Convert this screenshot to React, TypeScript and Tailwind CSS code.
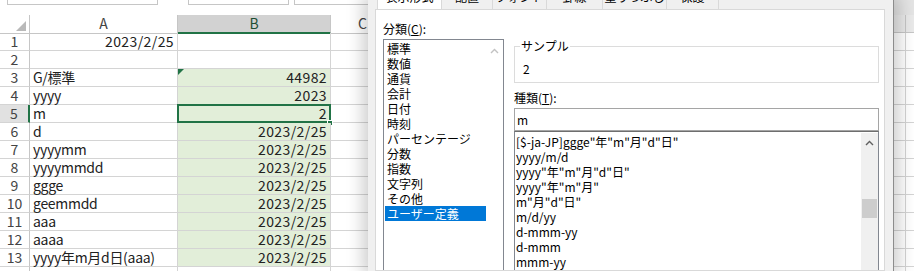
import React from "react";

const JP = "font-['Noto_Sans_CJK_JP','Noto_Sans',sans-serif]";

type Row = { n: number; a?: string; aRight?: string; b?: string };

const ROWS: Row[] = [
  { n: 1, aRight: "2023/2/25" },
  { n: 2 },
  { n: 3, a: "G/標準", b: "44982" },
  { n: 4, a: "yyyy", b: "2023" },
  { n: 5, a: "m", b: "2" },
  { n: 6, a: "d", b: "2023/2/25" },
  { n: 7, a: "yyyymm", b: "2023/2/25" },
  { n: 8, a: "yyyymmdd", b: "2023/2/25" },
  { n: 9, a: "ggge", b: "2023/2/25" },
  { n: 10, a: "geemmdd", b: "2023/2/25" },
  { n: 11, a: "aaa", b: "2023/2/25" },
  { n: 12, a: "aaaa", b: "2023/2/25" },
  { n: 13, a: "yyyy年m月d日(aaa)", b: "2023/2/25" },
  { n: 14 },
];

const CATEGORIES = [
  "標準",
  "数値",
  "通貨",
  "会計",
  "日付",
  "時刻",
  "パーセンテージ",
  "分数",
  "指数",
  "文字列",
  "その他",
  "ユーザー定義",
];

const FORMATS = [
  '[$-ja-JP]ggge"年"m"月"d"日"',
  "yyyy/m/d",
  'yyyy"年"m"月"d"日"',
  'yyyy"年"m"月"',
  'm"月"d"日"',
  "m/d/yy",
  "d-mmm-yy",
  "d-mmm",
  "mmm-yy",
  "h:mm AM/PM",
];

const TABS = [
  { label: "表示形式", w: "w-[65px]", active: true },
  { label: "配置", w: "w-[51px]" },
  { label: "フォント", w: "w-[54px]" },
  { label: "罫線", w: "w-[56px]" },
  { label: "塗りつぶし", w: "w-[64px]" },
  { label: "保護", w: "w-[52px]" },
];

function ChevronUp({ color }: { color: string }) {
  return (
    <svg width="9" height="6" viewBox="0 0 9 6" fill="none">
      <path d="M1 5L4.5 1.5L8 5" stroke={color} strokeWidth="1.4" />
    </svg>
  );
}

function Sheet() {
  return (
    <div className={`w-[368px] h-[271px] shrink-0 flex flex-col overflow-hidden text-[14px] text-[#222] ${JP}`}>
      {/* formula bar remnants */}
      <div className="h-[15px] shrink-0 flex items-start bg-white">
        <div className="ml-[7px] w-[163px] h-[5px] border-x border-b border-[#c6c6c6]" />
        <div className="ml-[30px] w-[110px] h-[5px] border-x border-b border-[#c6c6c6]" />
        <div className="ml-[5px] w-[80px] h-[5px] border-l border-b border-[#c6c6c6]" />
      </div>

      {/* column header */}
      <div className="grid grid-cols-[30px_148px_153px_64px] h-[18px] shrink-0 text-[14px] leading-[17px] text-[#444]">
        <div className="border-r border-b border-[#c6c6c6] flex items-end justify-end pr-[3px] pb-[2px]">
          <svg width="10" height="10" viewBox="0 0 10 10">
            <path d="M10 0V10H0Z" fill="#b9b9b9" />
          </svg>
        </div>
        <div className="border-r border-b border-[#c6c6c6] text-center">A</div>
        <div className="bg-[#d2d2d2] border-r border-[#c6c6c6] border-b-2 border-b-[#217346] text-center text-[#1e4e33]">B</div>
        <div className="border-r border-b border-[#c6c6c6] text-center">C</div>
      </div>

      {ROWS.map((r) => {
        const sel = r.n >= 3 && r.n <= 13;
        const active = r.n === 5;
        return (
          <div key={r.n} className="grid grid-cols-[30px_148px_153px_64px] h-[18px] leading-[17px] shrink-0">
            <div
              className={`border-b border-[#d4d4d4] text-center text-[#444] ${
                active ? "bg-[#e1e1e1] border-r-2 border-r-[#217346]" : "border-r border-r-[#c6c6c6]"
              }`}
            >
              {r.n}
            </div>
            <div className="border-r border-b border-[#d4d4d4] px-[3px] whitespace-nowrap tracking-[-0.3px]">
              {r.aRight ? <div className="text-right tracking-[0.4px]">{r.aRight}</div> : r.a}
            </div>
            <div
              className={`relative border-r border-b border-[#d4d4d4] px-[3px] text-right tracking-[0.4px] ${
                sel ? "bg-[#e2eed9]" : ""
              }`}
            >
              {r.b}
              {r.n === 3 && (
                <svg className="absolute left-0 top-0" width="6" height="6" viewBox="0 0 6 6">
                  <path d="M0 0H6L0 6Z" fill="#217346" />
                </svg>
              )}
              {active && (
                <>
                  <div className="absolute -left-[1px] -top-[1px] -right-[1px] -bottom-[1px] border-2 border-[#217346]" />
                  <div className="absolute -right-[3px] -bottom-[4px] w-[6px] h-[6px] bg-[#217346] border border-white" />
                </>
              )}
            </div>
            <div className="border-r border-b border-[#d4d4d4]" />
          </div>
        );
      })}
    </div>
  );
}

function SheetRight() {
  return (
    <div className="flex-1 h-[271px] flex flex-col overflow-hidden">
      <div className="h-[15px] shrink-0 bg-[#e4e4e4]" />
      <div className="h-[18px] shrink-0 bg-[#e9e9e9] border-b border-[#c6c6c6] flex">
        <div className="w-[12px] border-r border-[#c6c6c6]" />
      </div>
      {ROWS.map((r) => (
        <div key={r.n} className="h-[18px] shrink-0 flex border-b border-[#d4d4d4]">
          <div className="w-[12px] border-r border-[#d4d4d4]" />
        </div>
      ))}
    </div>
  );
}

function Dialog() {
  return (
    <div
      className={`relative z-10 w-[526px] h-[271px] shrink-0 flex flex-col bg-[#f0f0f0] pl-[7px] pr-[8px] border-r border-[#8c8c8c] shadow-[0_0_16px_5px_rgba(0,0,0,0.2)] text-[12px] leading-[15px] text-black ${JP}`}
    >
      {/* tabs, cut off at the top of the shot */}
      <div className="h-[9px] shrink-0 overflow-hidden flex items-end pl-[2px]">
        {TABS.map((t) => (
          <div
            key={t.label}
            className={`${t.w} h-[26px] shrink-0 flex items-center justify-center border-t border-r border-[#d9d9d9] ${
              t.active ? "bg-white border-l" : "bg-[#f0f0f0]"
            }`}
          >
            {t.label}
          </div>
        ))}
      </div>

      <div className="flex-1 min-h-0 overflow-hidden bg-white border border-[#d9d9d9] pl-[7px] pr-[5px] flex gap-[10px]">
        {/* category */}
        <div className="w-[121px] shrink-0 flex flex-col">
          <div className="mt-[11px] shrink-0">
            分類(<span className="underline">C</span>):
          </div>
          <div className="mt-[3px] h-[260px] shrink-0 border border-[#828790] flex">
            <div className="w-[102px] pt-[1px] pl-[1px]">
              {CATEGORIES.map((c) => (
                <div
                  key={c}
                  className={`h-[15px] pl-[2px] whitespace-nowrap ${
                    c === "ユーザー定義" ? "bg-[#0078d7] text-white" : ""
                  }`}
                >
                  {c}
                </div>
              ))}
            </div>
            <div className="flex-1 flex justify-center pt-[8px]">
              <ChevronUp color="#c2c2c2" />
            </div>
          </div>
        </div>

        {/* sample + type */}
        <div className="flex-1 flex flex-col">
          <div className="relative mt-[36px] h-[37px] shrink-0 border border-[#dcdcdc] pl-[8px] pt-[14px]">
            <span className="absolute left-[5px] -top-[9px] bg-white px-[1px]">サンプル</span>
            2
          </div>
          <div className="mt-[7px] shrink-0">
            種類(<span className="underline">T</span>):
          </div>
          <div className="mt-[3px] h-[23px] shrink-0 border border-[#a5a5a5] pl-[2px] flex items-center">m</div>
          <div className="h-[160px] shrink-0 border border-[#828790] border-t-[#6e6e6e] flex">
            <div className="flex-1 pt-[2px] pl-[1px]">
              {FORMATS.map((f) => (
                <div key={f} className="h-[15px] whitespace-nowrap">
                  {f}
                </div>
              ))}
            </div>
            <div className="w-[17px] mt-[1px] bg-[#f0f0f0] flex flex-col items-center">
              <div className="pt-[7px]">
                <ChevronUp color="#606060" />
              </div>
              <div className="mt-[53px] w-[15px] h-[19px] bg-[#cdcdcd]" />
            </div>
          </div>
        </div>
      </div>
    </div>
  );
}

export default function App() {
  return (
    <div className="w-[914px] h-[271px] overflow-hidden flex bg-white">
      <Sheet />
      <Dialog />
      <SheetRight />
    </div>
  );
}
